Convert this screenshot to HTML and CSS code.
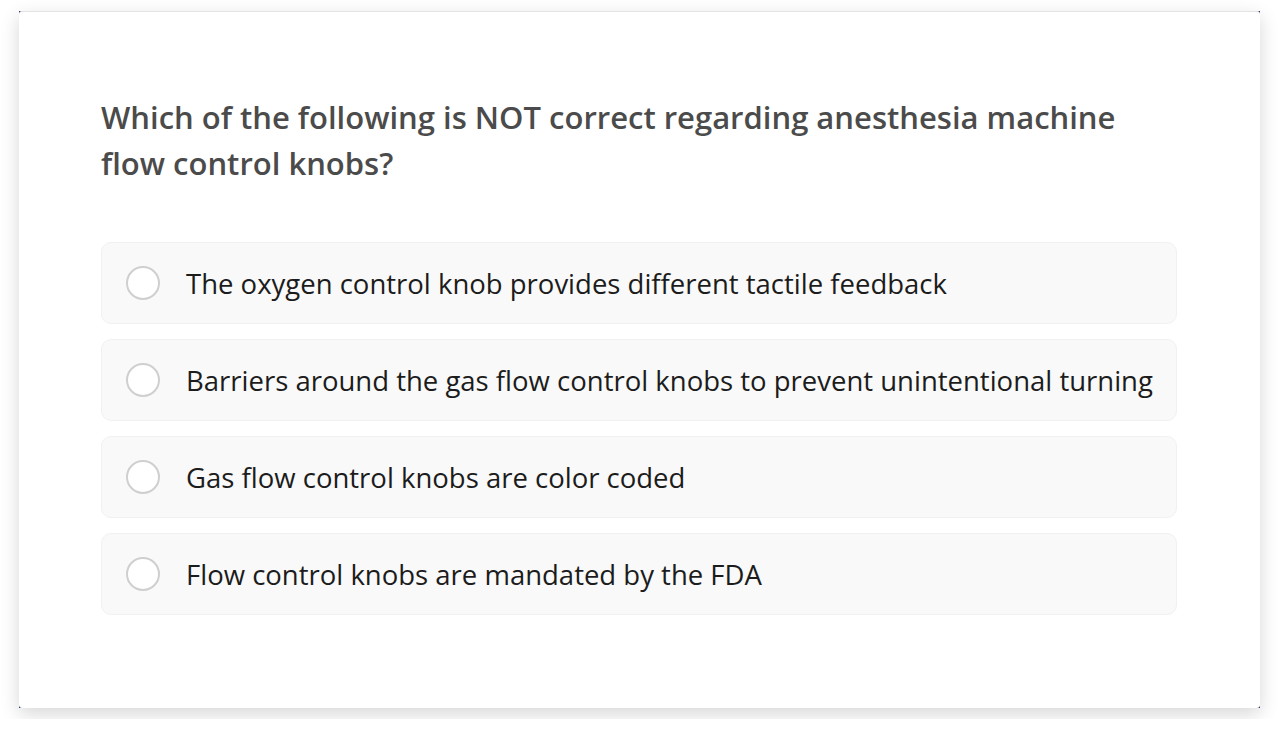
FILE: index.html
```html
<!DOCTYPE html>
<html>
<head>
<meta charset="utf-8">
<link rel="stylesheet" href="styles.css">
</head>
<body>
<div class="page">
  <div class="frame">
    <div class="card">
      <h1 class="question">Which of the following is NOT correct regarding anesthesia machine flow control knobs?</h1>
      <div class="options">
        <label class="option"><span class="radio"></span><span class="text">The oxygen control knob provides different tactile feedback</span></label>
        <label class="option"><span class="radio"></span><span class="text">Barriers around the gas flow control knobs to prevent unintentional turning</span></label>
        <label class="option"><span class="radio"></span><span class="text">Gas flow control knobs are color coded</span></label>
        <label class="option"><span class="radio"></span><span class="text">Flow control knobs are mandated by the FDA</span></label>
      </div>
    </div>
  </div>
</div>
</body>
</html>
```
FILE: styles.css
```css
html, body {
  margin: 0;
  padding: 0;
  background: #ffffff;
}
body {
  font-family: "Open Sans", "Noto Sans", sans-serif;
}
.page {
  padding: 11px 19px;
  width: 1241px;
}
.frame {
  width: 1241px;
  height: 697px;
  background: #14305a;
  box-shadow: 0 6px 18px rgba(0, 0, 0, 0.16);
}
.card {
  box-sizing: border-box;
  width: 100%;
  height: 100%;
  background: #ffffff;
  border-radius: 3px;
  border-top: 1px solid #e4e4e4;
  padding: 82px 83px 0 82px;
  display: flex;
  flex-direction: column;
}
.question {
  margin: 0;
  font-size: 31px;
  font-weight: 600;
  line-height: 46px;
  color: #4b4b4b;
  width: 1076px;
}
.options {
  margin-top: 56px;
  display: flex;
  flex-direction: column;
  gap: 15px;
}
.option {
  box-sizing: border-box;
  height: 82px;
  display: flex;
  align-items: center;
  padding-left: 24px;
  background: #f9f9f9;
  border: 1px solid #f1f1f1;
  border-radius: 10px;
}
.radio {
  box-sizing: border-box;
  width: 34px;
  height: 34px;
  border: 2px solid #cfcfcf;
  border-radius: 50%;
  background: #ffffff;
  flex: none;
}
.text {
  margin-left: 26px;
  font-size: 27.5px;
  color: #1c1c1c;
  white-space: nowrap;
}
```
